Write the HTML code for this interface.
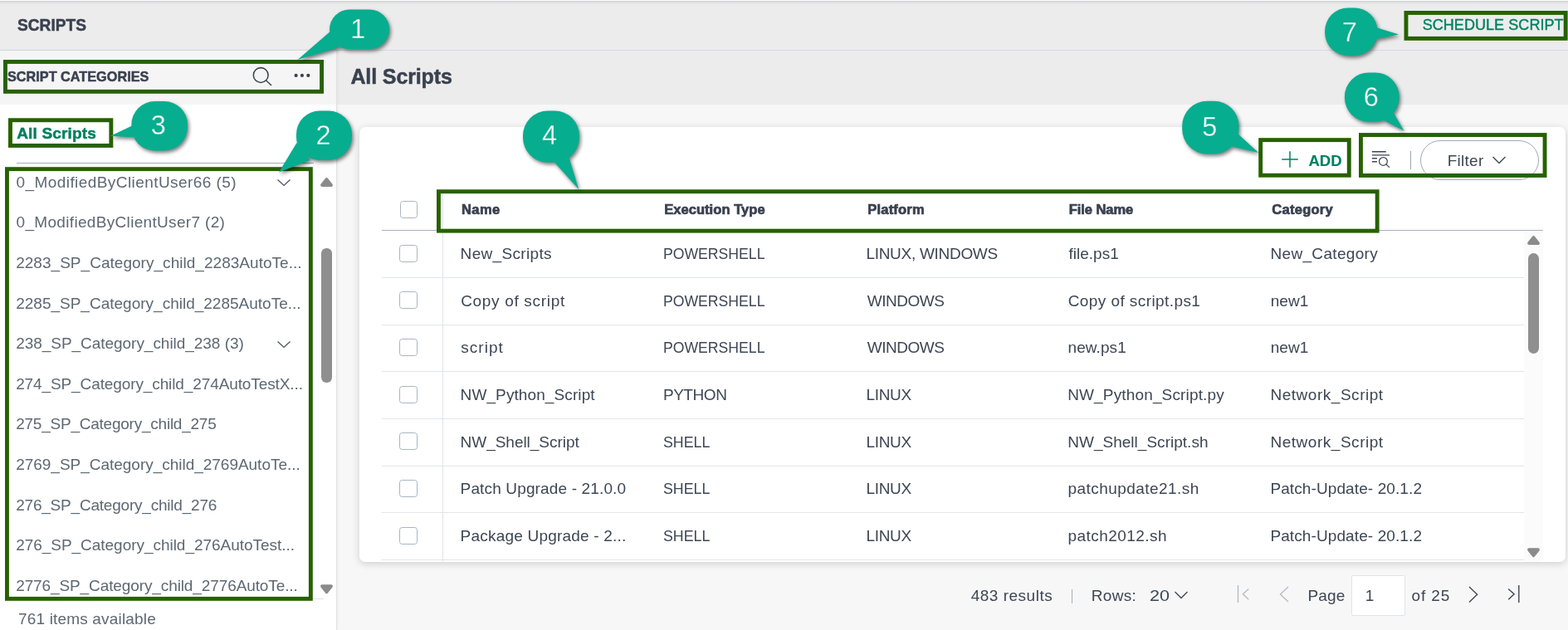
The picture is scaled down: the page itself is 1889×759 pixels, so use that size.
<!DOCTYPE html><html><head><meta charset="utf-8"><title>Scripts</title><style>
*{box-sizing:border-box;margin:0;padding:0}
html,body{width:1889px;height:759px;overflow:hidden;background:#f7f7f7;font-family:"Liberation Sans",sans-serif;color:#3a4251}
.abs,.t,.cb{position:absolute}
.t{white-space:nowrap;line-height:1;transform-origin:0 0;color:#3a4150}
.cb{width:22px;height:21px;border:1px solid #a9b5c0;border-radius:3.5px;background:#fff}
.b{font-weight:bold;-webkit-text-stroke:.5px currentColor}
.t.g{color:#00805f}
.t.cat{color:#5d6873}
.t.cell{color:#3d4654}
.hl{position:absolute;height:1px;background:#e2e5e8}
</style></head><body>
<div class="abs" style="left:0;top:0;width:1889px;height:61px;background:#ececec;border-bottom:1px solid #d6dbdf"></div>
<div class="abs" style="left:0;top:0;width:1889px;height:1px;background:#fdfdfd"></div>
<div class="abs" style="left:0;top:1px;width:1889px;height:6px;background:linear-gradient(to bottom,#d0d3d5 0,#d6d8da 17%,#e0e1e2 34%,#e6e7e7 50%,#e9e9e9 67%,#ebebeb 84%,#ececec 100%)"></div>
<div class="abs" style="left:405px;top:61px;width:1484px;height:65px;background:#ececec"></div>
<div class="abs" style="left:0;top:61px;width:406px;height:698px;background:#fff;border-right:1px solid #e2e2e2;box-shadow:1px 0 3px rgba(0,0,0,.05)"></div>
<div class="abs" style="left:0;top:61px;width:405px;height:65px;background:#f5f5f5"></div>
<svg class="abs" style="left:300px;top:76px" width="32" height="32" viewBox="0 0 32 32"><circle cx="14.2" cy="14.5" r="8.9" fill="none" stroke="#3a4251" stroke-width="1.55"/><path d="M20.6 20.9 L26.6 26.6" stroke="#3a4251" stroke-width="1.4" stroke-linecap="round"/></svg>
<svg class="abs" style="left:352px;top:86px" width="24" height="10" viewBox="0 0 24 10"><circle cx="4.6" cy="4.9" r="2.1" fill="#3a4251"/><circle cx="11.9" cy="4.9" r="2.1" fill="#3a4251"/><circle cx="19.3" cy="4.9" r="2.1" fill="#3a4251"/></svg>
<div class="abs" style="left:20px;top:196px;width:358px;height:1px;background:#a3adb6"></div>
<svg class="abs" style="left:333px;top:214.8px" width="18" height="12" viewBox="0 0 18 12"><path d="M1.5 1.6 L9 8.4 L16.5 1.6" fill="none" stroke="#4a5462" stroke-width="1.3"/></svg>
<svg class="abs" style="left:333px;top:409.7px" width="18" height="12" viewBox="0 0 18 12"><path d="M1.5 1.6 L9 8.4 L16.5 1.6" fill="none" stroke="#4a5462" stroke-width="1.3"/></svg>
<svg class="abs" style="left:385px;top:213.2px" width="17" height="14" viewBox="0 0 17 14"><path d="M3.1 10.1 L8.5 3.2 L13.9 10.1 Z" fill="#8b8b8b" stroke="#8b8b8b" stroke-width="4" stroke-linejoin="round"/></svg>
<div class="abs" style="left:387px;top:299px;width:12.5px;height:162px;border-radius:6.25px;background:#8f8f8f"></div>
<svg class="abs" style="left:385.1px;top:703.3px" width="17" height="14" viewBox="0 0 17 14"><path d="M3.1 3.2 L13.9 3.2 L8.5 10.1 Z" fill="#8b8b8b" stroke="#8b8b8b" stroke-width="4" stroke-linejoin="round"/></svg>
<div class="abs" style="left:8px;top:721px;width:382px;height:1px;background:#dfe3e6"></div>
<div class="abs" style="left:433px;top:152.5px;width:1453px;height:524.5px;background:#fff;border-radius:7px;box-shadow:0 2px 10px rgba(0,0,0,.17)"></div>
<svg class="abs" style="left:1543.25px;top:181.25px" width="22" height="22" viewBox="0 0 22 22"><path d="M11 1.2 V20.8 M1.2 11 H20.8" stroke="#00805f" stroke-width="1.5"/></svg>
<svg class="abs" style="left:1651px;top:180px" width="26" height="24" viewBox="0 0 26 24"><path d="M1.8 2.8 H18.7 M1.8 6.9 H23 M1.8 10.8 H8 M1.8 14.8 H8" stroke="#3d4654" stroke-width="1.4"/><circle cx="15.4" cy="14.4" r="4.9" fill="none" stroke="#3d4654" stroke-width="1.25"/><path d="M18.9 17.9 L22.6 21.4" stroke="#3d4654" stroke-width="1.3" stroke-linecap="round"/></svg>
<div class="abs" style="left:1698.9px;top:182.2px;width:1px;height:21.6px;background:#9aa5b0"></div>
<div class="abs" style="left:1711px;top:169px;width:142.5px;height:47.5px;border:1px solid #a0abb5;border-radius:24px;background:#fff"></div>
<svg class="abs" style="left:1797.3px;top:186.8px" width="18" height="12" viewBox="0 0 18 12"><path d="M1.5 2 L9 9.5 L16.5 2" fill="none" stroke="#3d4654" stroke-width="1.3"/></svg>
<div class="cb" style="left:482px;top:242px;width:21px;height:21px"></div>
<div class="hl" style="left:460px;top:277px;width:1399px;background:#a5b1bb"></div>
<div class="abs" style="left:533px;top:229px;width:1px;height:447px;background:#dfe3e7"></div>
<div class="abs" style="left:1836px;top:279px;width:23px;height:397px;background:#fbfbfb;border-bottom-right-radius:4px"></div>
<div class="cb" style="left:481px;top:294.8px"></div>
<div class="hl" style="left:460px;top:334.0px;width:1376px"></div>
<div class="cb" style="left:481px;top:351.4px"></div>
<div class="hl" style="left:460px;top:390.6px;width:1376px"></div>
<div class="cb" style="left:481px;top:408.1px"></div>
<div class="hl" style="left:460px;top:447.3px;width:1376px"></div>
<div class="cb" style="left:481px;top:464.8px"></div>
<div class="hl" style="left:460px;top:503.9px;width:1376px"></div>
<div class="cb" style="left:481px;top:521.4px"></div>
<div class="hl" style="left:460px;top:560.6px;width:1376px"></div>
<div class="cb" style="left:481px;top:578.0px"></div>
<div class="hl" style="left:460px;top:617.2px;width:1376px"></div>
<div class="cb" style="left:481px;top:634.7px"></div>
<div class="hl" style="left:460px;top:673.9px;width:1376px"></div>
<svg class="abs" style="left:1839.1px;top:283.3px" width="17" height="14" viewBox="0 0 17 14"><path d="M3.1 10.1 L8.5 3.2 L13.9 10.1 Z" fill="#8b8b8b" stroke="#8b8b8b" stroke-width="4" stroke-linejoin="round"/></svg>
<div class="abs" style="left:1840.9px;top:305px;width:13.1px;height:121px;border-radius:6.5px;background:#8f8f8f"></div>
<svg class="abs" style="left:1839px;top:659.2px" width="17" height="14" viewBox="0 0 17 14"><path d="M3.1 3.2 L13.9 3.2 L8.5 10.1 Z" fill="#8b8b8b" stroke="#8b8b8b" stroke-width="4" stroke-linejoin="round"/></svg>
<div class="abs" style="left:1291.3px;top:710px;width:1.2px;height:16.5px;background:#a7afb8"></div>
<svg class="abs" style="left:1414.3px;top:711.3px" width="18" height="12" viewBox="0 0 18 12"><path d="M1.5 2 L9 9.5 L16.5 2" fill="none" stroke="#3d4654" stroke-width="1.3"/></svg>
<svg class="abs" style="left:1488px;top:703px" width="20" height="24" viewBox="0 0 20 24"><path d="M3.5 2 V23 M16.3 6.5 L9.4 12.85 L16.3 19.2" fill="none" stroke="#b6bdc4" stroke-width="1.4"/></svg>
<svg class="abs" style="left:1539px;top:703px" width="16" height="24" viewBox="0 0 16 24"><path d="M13 4 L3.4 13.05 L13 22.1" fill="none" stroke="#b6bdc4" stroke-width="1.4"/></svg>
<div class="abs" style="left:1628.2px;top:693.4px;width:64.8px;height:48.2px;background:#fff;border:1px solid #e1e4e7;border-radius:2px"></div>
<svg class="abs" style="left:1767px;top:703px" width="16" height="24" viewBox="0 0 16 24"><path d="M3 4 L12.6 13.25 L3 22.5" fill="none" stroke="#3d4654" stroke-width="1.4"/></svg>
<svg class="abs" style="left:1814px;top:703px" width="20" height="24" viewBox="0 0 20 24"><path d="M15.8 2 V23 M3.2 6.5 L10.1 12.85 L3.2 19.2" fill="none" stroke="#3d4654" stroke-width="1.4"/></svg>
<div class="abs" id="tx" style="left:0;top:0;width:1889px;height:759px;will-change:transform">
<div class="t b" id="t_scripts" style="left:21.10px;top:19.80px;font-size:20px;transform:scaleX(0.9564);">SCRIPTS</div>
<div class="t b" id="t_sc" style="left:9.30px;top:84.23px;font-size:17px;transform:scaleX(0.9558);">SCRIPT CATEGORIES</div>
<div class="t b" id="t_title" style="left:422.45px;top:79.88px;font-size:25px;letter-spacing:-0.122px;">All Scripts</div>
<div class="t g" id="t_sched" style="left:1713.66px;top:21.39px;font-size:18px;letter-spacing:0.064px;-webkit-text-stroke:.4px #00805f;">SCHEDULE SCRIPT</div>
<div class="t b g" id="t_all" style="left:20.13px;top:150.64px;font-size:19px;letter-spacing:0.181px;">All Scripts</div>
<div class="t cat" id="t_cat0" style="left:19.53px;top:210.14px;font-size:19px;letter-spacing:0.427px;">0_ModifiedByClientUser66 (5)</div>
<div class="t cat" id="t_cat1" style="left:19.53px;top:258.44px;font-size:19px;letter-spacing:0.325px;">0_ModifiedByClientUser7 (2)</div>
<div class="t cat" id="t_cat2" style="left:19.18px;top:306.84px;font-size:19px;letter-spacing:0.031px;">2283_SP_Category_child_2283AutoTe...</div>
<div class="t cat" id="t_cat3" style="left:19.18px;top:355.75px;font-size:19px;letter-spacing:0.003px;">2285_SP_Category_child_2285AutoTe...</div>
<div class="t cat" id="t_cat4" style="left:19.15px;top:404.05px;font-size:19px;letter-spacing:-0.037px;">238_SP_Category_child_238 (3)</div>
<div class="t cat" id="t_cat5" style="left:19.15px;top:452.75px;font-size:19px;letter-spacing:-0.107px;">274_SP_Category_child_274AutoTestX...</div>
<div class="t cat" id="t_cat6" style="left:19.18px;top:500.84px;font-size:19px;letter-spacing:-0.233px;">275_SP_Category_child_275</div>
<div class="t cat" id="t_cat7" style="left:19.18px;top:549.55px;font-size:19px;letter-spacing:-0.021px;">2769_SP_Category_child_2769AutoTe...</div>
<div class="t cat" id="t_cat8" style="left:19.18px;top:598.75px;font-size:19px;letter-spacing:-0.209px;">276_SP_Category_child_276</div>
<div class="t cat" id="t_cat9" style="left:19.18px;top:647.25px;font-size:19px;letter-spacing:-0.034px;">276_SP_Category_child_276AutoTest...</div>
<div class="t cat" id="t_cat10" style="left:19.18px;top:695.85px;font-size:19px;letter-spacing:-0.106px;">2776_SP_Category_child_2776AutoTe...</div>
<div class="t cat" id="t_items" style="left:22.00px;top:736.05px;font-size:19px;letter-spacing:0.171px;">761 items available</div>
<div class="t b g" id="t_add" style="left:1576.45px;top:184.67px;font-size:18.5px;letter-spacing:-0.012px;-webkit-text-stroke:.1px #00805f;">ADD</div>
<div class="t cell" id="t_filter" style="left:1743.76px;top:183.94px;font-size:19px;letter-spacing:0.250px;">Filter</div>
<div class="t b hd" id="t_h0" style="left:556.04px;top:244.36px;font-size:16.5px;letter-spacing:0.418px;-webkit-text-stroke:.7px currentColor;">Name</div>
<div class="t b hd" id="t_h1" style="left:800.16px;top:244.36px;font-size:16.5px;letter-spacing:0.060px;-webkit-text-stroke:.7px currentColor;">Execution Type</div>
<div class="t b hd" id="t_h2" style="left:1045.26px;top:244.36px;font-size:16.5px;letter-spacing:0.204px;-webkit-text-stroke:.7px currentColor;">Platform</div>
<div class="t b hd" id="t_h3" style="left:1287.81px;top:244.36px;font-size:16.5px;letter-spacing:-0.061px;-webkit-text-stroke:.7px currentColor;">File Name</div>
<div class="t b hd" id="t_h4" style="left:1532.32px;top:244.36px;font-size:16.5px;letter-spacing:0.267px;-webkit-text-stroke:.7px currentColor;">Category</div>
<div class="t cell" id="t_r0c0" style="left:554.59px;top:295.94px;font-size:19px;letter-spacing:0.336px;">New_Scripts</div>
<div class="t cell" id="t_r0c1" style="left:799.37px;top:295.94px;font-size:19px;transform:scaleX(0.9277);">POWERSHELL</div>
<div class="t cell" id="t_r0c2" style="left:1043.45px;top:295.94px;font-size:19px;letter-spacing:-0.294px;">LINUX, WINDOWS</div>
<div class="t cell" id="t_r0c3" style="left:1287.38px;top:295.94px;font-size:19px;letter-spacing:0.032px;">file.ps1</div>
<div class="t cell" id="t_r0c4" style="left:1530.43px;top:295.94px;font-size:19px;letter-spacing:0.334px;">New_Category</div>
<div class="t cell" id="t_r1c0" style="left:555.14px;top:352.59px;font-size:19px;letter-spacing:0.685px;">Copy of script</div>
<div class="t cell" id="t_r1c1" style="left:799.37px;top:352.59px;font-size:19px;transform:scaleX(0.9277);">POWERSHELL</div>
<div class="t cell" id="t_r1c2" style="left:1044.75px;top:352.59px;font-size:19px;letter-spacing:-0.487px;">WINDOWS</div>
<div class="t cell" id="t_r1c3" style="left:1286.70px;top:352.59px;font-size:19px;letter-spacing:0.421px;">Copy of script.ps1</div>
<div class="t cell" id="t_r1c4" style="left:1530.69px;top:352.59px;font-size:19px;letter-spacing:0.069px;">new1</div>
<div class="t cell" id="t_r2c0" style="left:555.15px;top:409.25px;font-size:19px;letter-spacing:1.053px;">script</div>
<div class="t cell" id="t_r2c1" style="left:799.37px;top:409.25px;font-size:19px;transform:scaleX(0.9277);">POWERSHELL</div>
<div class="t cell" id="t_r2c2" style="left:1044.75px;top:409.25px;font-size:19px;letter-spacing:-0.487px;">WINDOWS</div>
<div class="t cell" id="t_r2c3" style="left:1286.50px;top:409.25px;font-size:19px;letter-spacing:0.091px;">new.ps1</div>
<div class="t cell" id="t_r2c4" style="left:1530.69px;top:409.25px;font-size:19px;letter-spacing:0.069px;">new1</div>
<div class="t cell" id="t_r3c0" style="left:554.59px;top:465.89px;font-size:19px;letter-spacing:0.102px;">NW_Python_Script</div>
<div class="t cell" id="t_r3c1" style="left:798.90px;top:465.89px;font-size:19px;letter-spacing:-0.434px;">PYTHON</div>
<div class="t cell" id="t_r3c2" style="left:1043.43px;top:465.89px;font-size:19px;letter-spacing:-0.305px;">LINUX</div>
<div class="t cell" id="t_r3c3" style="left:1286.15px;top:465.89px;font-size:19px;letter-spacing:0.152px;">NW_Python_Script.py</div>
<div class="t cell" id="t_r3c4" style="left:1530.43px;top:465.89px;font-size:19px;letter-spacing:0.531px;">Network_Script</div>
<div class="t cell" id="t_r4c0" style="left:554.59px;top:522.55px;font-size:19px;letter-spacing:-0.029px;">NW_Shell_Script</div>
<div class="t cell" id="t_r4c1" style="left:798.85px;top:522.55px;font-size:19px;transform:scaleX(0.9367);">SHELL</div>
<div class="t cell" id="t_r4c2" style="left:1043.43px;top:522.55px;font-size:19px;letter-spacing:-0.305px;">LINUX</div>
<div class="t cell" id="t_r4c3" style="left:1286.20px;top:522.55px;font-size:19px;letter-spacing:0.022px;">NW_Shell_Script.sh</div>
<div class="t cell" id="t_r4c4" style="left:1530.43px;top:522.55px;font-size:19px;letter-spacing:0.531px;">Network_Script</div>
<div class="t cell" id="t_r5c0" style="left:554.59px;top:579.20px;font-size:19px;letter-spacing:0.145px;">Patch Upgrade - 21.0.0</div>
<div class="t cell" id="t_r5c1" style="left:798.85px;top:579.20px;font-size:19px;transform:scaleX(0.9367);">SHELL</div>
<div class="t cell" id="t_r5c2" style="left:1043.43px;top:579.20px;font-size:19px;letter-spacing:-0.305px;">LINUX</div>
<div class="t cell" id="t_r5c3" style="left:1286.43px;top:579.20px;font-size:19px;letter-spacing:0.459px;">patchupdate21.sh</div>
<div class="t cell" id="t_r5c4" style="left:1530.43px;top:579.20px;font-size:19px;letter-spacing:0.102px;">Patch-Update- 20.1.2</div>
<div class="t cell" id="t_r6c0" style="left:554.58px;top:635.85px;font-size:19px;letter-spacing:0.207px;">Package Upgrade - 2...</div>
<div class="t cell" id="t_r6c1" style="left:798.85px;top:635.85px;font-size:19px;transform:scaleX(0.9367);">SHELL</div>
<div class="t cell" id="t_r6c2" style="left:1043.43px;top:635.85px;font-size:19px;letter-spacing:-0.305px;">LINUX</div>
<div class="t cell" id="t_r6c3" style="left:1286.39px;top:635.85px;font-size:19px;letter-spacing:0.462px;">patch2012.sh</div>
<div class="t cell" id="t_r6c4" style="left:1530.43px;top:635.85px;font-size:19px;letter-spacing:0.102px;">Patch-Update- 20.1.2</div>
<div class="t cell" id="t_res" style="left:1169.71px;top:707.75px;font-size:19px;letter-spacing:0.502px;">483 results</div>
<div class="t cell" id="t_rows" style="left:1314.79px;top:707.75px;font-size:19px;letter-spacing:0.298px;">Rows:</div>
<div class="t cell" id="t_20" style="left:1384.70px;top:707.75px;font-size:19px;transform:scaleX(1.1342);">20</div>
<div class="t cell" id="t_page" style="left:1575.43px;top:707.75px;font-size:19px;letter-spacing:0.152px;">Page</div>
<div class="t cell" id="t_1" style="left:1644.73px;top:707.75px;font-size:19px;">1</div>
<div class="t cell" id="t_of" style="left:1700.47px;top:707.75px;font-size:19px;letter-spacing:0.894px;">of 25</div>
</div>
<svg class="abs" style="left:0;top:0;pointer-events:none;will-change:transform" width="1889" height="759" viewBox="0 0 1889 759"><defs><filter id="ds" x="-30%" y="-30%" width="170%" height="170%" color-interpolation-filters="sRGB"><feDropShadow dx="1.8" dy="2.6" stdDeviation="2.2" flood-color="#000" flood-opacity=".5"/></filter></defs>
<g fill="none" stroke="#276100" stroke-width="4.9">
<rect x="6.45" y="74.45" width="381.10" height="35.90"/>
<rect x="12.45" y="144.75" width="121.40" height="30.70"/>
<rect x="8.45" y="203.65" width="365.90" height="517.70"/>
<rect x="528.45" y="230.75" width="1130.70" height="47.40"/>
<rect x="1518.65" y="168.65" width="106.60" height="42.60"/>
<rect x="1639.45" y="162.55" width="221.60" height="48.90"/>
<rect x="1693.95" y="15.45" width="192.20" height="30.90"/>
</g>
<g filter="url(#ds)" fill="#07ad8f"><polygon points="400,36 409,57 358.5,72"/><rect x="397" y="11.4" width="72.2" height="47.9" rx="24" ry="24"/></g>
<text x="431.2" y="45.5" text-anchor="middle" font-family="Liberation Sans, sans-serif" font-size="32.5" fill="#fff" stroke="#07ad8f" stroke-width=".3">1</text>
<g filter="url(#ds)" fill="#07ad8f"><polygon points="357.5,172 373.5,193 336,207.5"/><rect x="357" y="133.6" width="67" height="59.4" rx="28" ry="28"/></g>
<text x="389.5" y="174.1" text-anchor="middle" font-family="Liberation Sans, sans-serif" font-size="32.5" fill="#fff" stroke="#07ad8f" stroke-width=".3">2</text>
<g filter="url(#ds)" fill="#07ad8f"><polygon points="166.6,148 168.7,165.4 132.7,163.9"/><rect x="158.4" y="122" width="67.6" height="59.4" rx="28" ry="28"/></g>
<text x="190.8" y="161.8" text-anchor="middle" font-family="Liberation Sans, sans-serif" font-size="32.5" fill="#fff" stroke="#07ad8f" stroke-width=".3">3</text>
<g filter="url(#ds)" fill="#07ad8f"><polygon points="665.1,192.2 684.1,185.3 697.3,228.3"/><rect x="630" y="133.4" width="68" height="62.4" rx="30" ry="30"/></g>
<text x="662" y="174.2" text-anchor="middle" font-family="Liberation Sans, sans-serif" font-size="32.5" fill="#fff" stroke="#07ad8f" stroke-width=".3">4</text>
<g filter="url(#ds)" fill="#07ad8f"><polygon points="1487.7,157.9 1478.6,175.3 1516.2,184.1"/><rect x="1424.2" y="121.8" width="68.3" height="63.7" rx="30" ry="30"/></g>
<text x="1457.4" y="164.1" text-anchor="middle" font-family="Liberation Sans, sans-serif" font-size="32.5" fill="#fff" stroke="#07ad8f" stroke-width=".3">5</text>
<g filter="url(#ds)" fill="#07ad8f"><polygon points="1661.2,141.9 1676.1,131.1 1691.3,157.5"/><rect x="1619.9" y="87.4" width="65.8" height="59.3" rx="29" ry="29"/></g>
<text x="1651.7" y="128.2" text-anchor="middle" font-family="Liberation Sans, sans-serif" font-size="32.5" fill="#fff" stroke="#07ad8f" stroke-width=".3">6</text>
<g filter="url(#ds)" fill="#07ad8f"><polygon points="1654.4,32 1653.1,48.1 1685,41.4"/><rect x="1596.1" y="9.4" width="63.4" height="57.8" rx="28" ry="28"/></g>
<text x="1625.9" y="49.5" text-anchor="middle" font-family="Liberation Sans, sans-serif" font-size="32.5" fill="#fff" stroke="#07ad8f" stroke-width=".3">7</text>
</svg>
</body></html>
